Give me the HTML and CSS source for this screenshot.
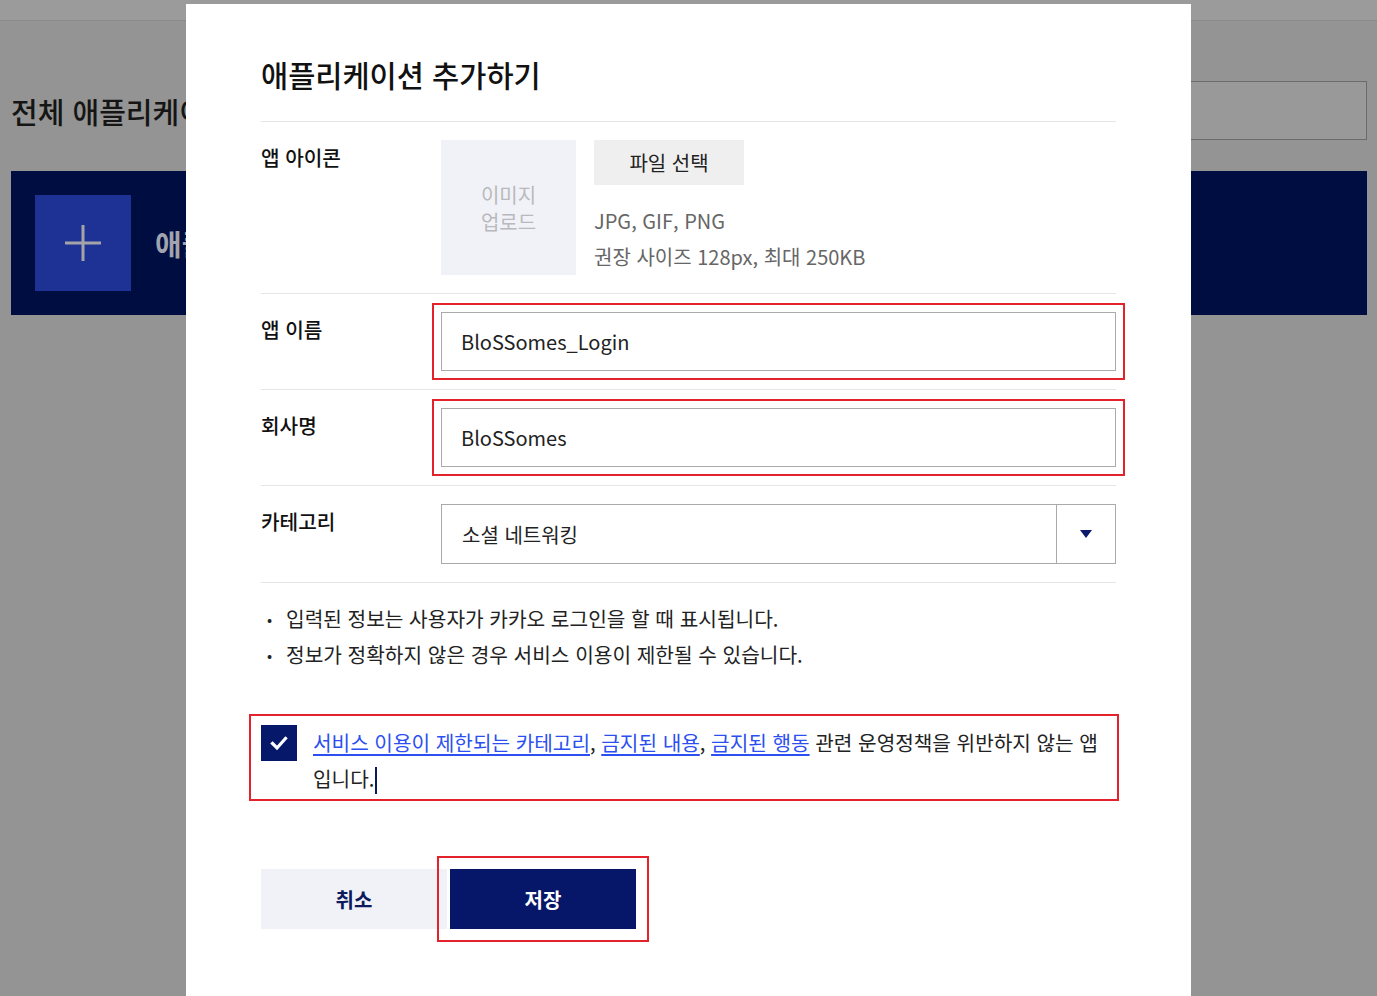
FILE: index.html
```html
<!DOCTYPE html>
<html lang="ko">
<head>
<meta charset="utf-8">
<title>애플리케이션 추가하기</title>
<link rel="stylesheet" href="styles.css">
</head>
<body>
<div class="page">
  <div class="topbar"></div>
  <div class="content">
    <div class="title-row">
      <h2 class="page-title">전체 애플리케이션</h2>
      <div class="search"></div>
    </div>
    <div class="banner">
      <div class="add-square">
        <svg width="96" height="96" viewBox="0 0 96 96"><path d="M48 30v36M30 48h36" stroke="#a3a3a8" stroke-width="3" fill="none"/></svg>
      </div>
      <span class="banner-text">애플리케이션 추가하기</span>
    </div>
  </div>
</div>

<div class="modal">
  <h1 class="modal-title">애플리케이션 추가하기</h1>

  <div class="row">
    <div class="label">앱 아이콘</div>
    <div class="icon-field">
      <div class="upload-box">이미지<br>업로드</div>
      <div class="file-info">
        <button class="file-btn">파일 선택</button>
        <p class="hint">JPG, GIF, PNG<br>권장 사이즈 128px, 최대 250KB</p>
      </div>
    </div>
  </div>

  <div class="row">
    <div class="label">앱 이름</div>
    <div class="field"><div class="input marked">BloSSomes_Login</div></div>
  </div>

  <div class="row">
    <div class="label">회사명</div>
    <div class="field"><div class="input marked">BloSSomes</div></div>
  </div>

  <div class="row">
    <div class="label">카테고리</div>
    <div class="field">
      <div class="select">
        <span class="select-value">소셜 네트워킹</span>
        <span class="select-arrow"><svg width="12" height="8" viewBox="0 0 12 8"><polygon points="0,0 12,0 6,8" fill="#0b1a6b"/></svg></span>
      </div>
    </div>
  </div>

  <ul class="notes">
    <li>입력된 정보는 사용자가 카카오 로그인을 할 때 표시됩니다.</li>
    <li>정보가 정확하지 않은 경우 서비스 이용이 제한될 수 있습니다.</li>
  </ul>

  <div class="agree">
    <span class="checkbox"><svg width="36" height="36" viewBox="0 0 36 36"><polyline points="11.5,18.5 16,23 24.5,13.5" fill="none" stroke="#fff" stroke-width="3.2" stroke-linecap="square"/></svg></span>
    <p class="agree-text"><a href="#">서비스 이용이 제한되는 카테고리</a>, <a href="#">금지된 내용</a>, <a href="#">금지된 행동</a> 관련 운영정책을 위반하지 않는 앱 입니다.<span class="caret"></span></p>
  </div>

  <div class="actions">
    <button class="btn cancel">취소</button>
    <button class="btn save">저장</button>
  </div>
</div>
</body>
</html>
```

FILE: styles.css
```css
html, body {
  margin: 0;
  padding: 0;
  height: 996px;
  overflow: hidden;
}
body {
  background: #939493;
  font-family: "Noto Sans CJK KR", "Noto Sans", sans-serif;
  color: #111;
  position: relative;
}
.topbar {
  height: 20px;
  background: #9b9b9b;
  border-bottom: 1px solid #8a8a8a;
}
.content {
  padding: 0 10px 0 11px;
}
.title-row {
  display: flex;
  align-items: center;
  justify-content: space-between;
  margin-top: 60px;
  height: 59px;
}
.page-title {
  margin: 0;
  font-size: 29px;
  font-weight: 500;
  color: #151515;
}
.search {
  width: 420px;
  height: 57px;
  border: 1px solid #6b6b6b;
  background: #999999;
}
.banner {
  margin-top: 31px;
  height: 144px;
  background: #000d40;
  display: flex;
  align-items: center;
  padding-left: 24px;
}
.add-square {
  width: 96px;
  height: 96px;
  background: #1e3296;
  display: flex;
}
.banner-text {
  margin-left: 24px;
  font-size: 29px;
  font-weight: 700;
  color: #a0a4ae;
}

.modal {
  position: absolute;
  left: 186px;
  top: 4px;
  width: 1005px;
  height: 1000px;
  box-sizing: border-box;
  background: #fff;
  padding: 48px 75px 0;
}
.modal-title {
  margin: 0;
  font-size: 29.5px;
  line-height: 44px;
  font-weight: 500;
  color: #111;
  padding-bottom: 25px;
  border-bottom: 1px solid #e5e5e5;
}
.row {
  display: flex;
  padding: 18px 0;
  border-bottom: 1px solid #e5e5e5;
}
.label {
  width: 180px;
  flex: none;
  font-size: 20.2px;
  line-height: 36px;
  font-weight: 500;
  color: #111;
}
.icon-field {
  display: flex;
}
.upload-box {
  width: 135px;
  height: 135px;
  background: #f1f2f7;
  color: #b9b9bd;
  font-size: 20px;
  line-height: 27px;
  display: flex;
  align-items: center;
  justify-content: center;
  text-align: center;
}
.file-info {
  margin-left: 18px;
}
.file-btn {
  width: 150px;
  height: 45px;
  border: 0;
  background: #efefef;
  font-family: inherit;
  font-size: 20px;
  color: #222;
  padding: 0;
}
.hint {
  margin: 18px 0 0;
  font-size: 20px;
  line-height: 36px;
  color: #666;
}
.field {
  flex: 1;
}
.input {
  height: 59px;
  box-sizing: border-box;
  border: 1px solid #aaa;
  padding-left: 19px;
  display: flex;
  align-items: center;
  font-size: 20px;
  color: #222;
}
.marked {
  outline: 2px solid #e3222b;
  outline-offset: 7px;
}
.select {
  height: 60px;
  box-sizing: border-box;
  border: 1px solid #aaa;
  display: flex;
  align-items: center;
}
.select-value {
  flex: 1;
  padding-left: 20px;
  font-size: 20px;
  color: #222;
}
.select-arrow {
  width: 58px;
  height: 100%;
  border-left: 1px solid #aaa;
  display: flex;
  align-items: center;
  justify-content: center;
}
.notes {
  list-style: none;
  margin: 0;
  padding: 18px 0 0;
}
.notes li {
  display: flex;
  font-size: 20.25px;
  line-height: 36px;
  color: #222;
}
.notes li::before {
  content: "•";
  width: 25px;
  flex: none;
  padding-left: 6px;
  box-sizing: border-box;
  font-size: 15px;
}
.agree {
  margin: 41px 0 0 -12px;
  width: 870px;
  box-sizing: border-box;
  border: 2px solid #e3222b;
  padding: 9px 0 2px 10px;
  display: flex;
  gap: 16px;
}
.checkbox {
  width: 36px;
  height: 36px;
  flex: none;
  background: #06186a;
  display: flex;
}
.agree-text {
  margin: 0;
  font-size: 20.2px;
  line-height: 36px;
  color: #222;
  word-break: keep-all;
}
.agree-text a {
  color: #2b4ff0;
  text-decoration: underline;
  text-underline-offset: 3px;
}
.caret {
  display: inline-block;
  width: 2px;
  height: 27px;
  background: #0b1a5e;
  vertical-align: -7px;
  margin-left: 1px;
}
.actions {
  display: flex;
  margin-top: 68px;
}
.btn {
  width: 186px;
  height: 60px;
  border: 0;
  padding: 0;
  font-family: inherit;
  font-size: 20px;
  font-weight: 700;
}
.cancel {
  background: #f0f2f7;
  color: #0d1b5c;
}
.save {
  margin-left: 3px;
  background: #06176a;
  color: #fff;
  outline: 2px solid #e3222b;
  outline-offset: 11px;
}
```
